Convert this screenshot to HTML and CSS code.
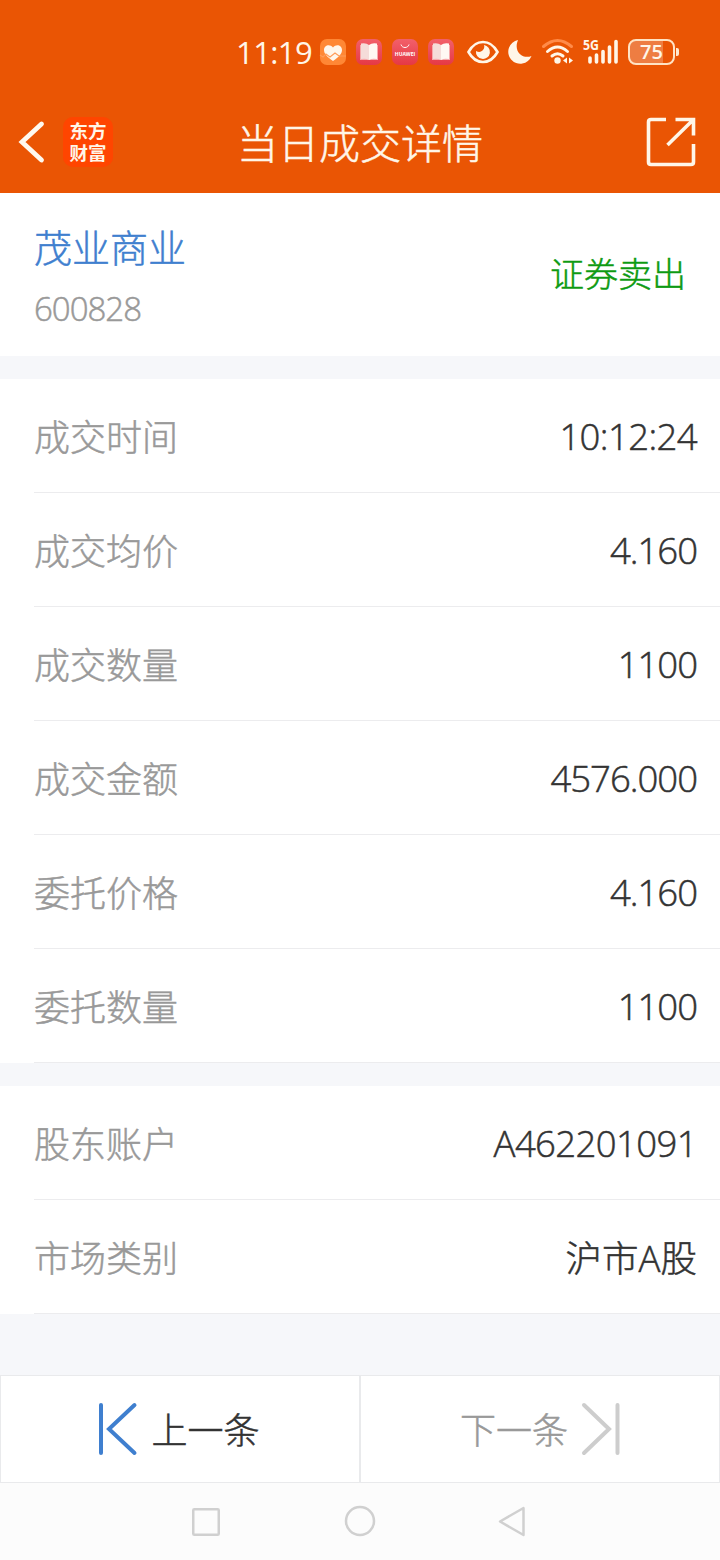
FILE: index.html
```
<!DOCTYPE html>
<html lang="zh-CN">
<head>
    <meta charset="UTF-8">
    <meta name="viewport" content="width=device-width, initial-scale=1.0">
    <title>当日成交详情</title>
    <link rel="stylesheet" href="styles.css">
</head>
<body>
    <header class="top">
        <div class="status">
            <span class="clock">11:19</span>
            <svg class="apps" width="134" height="26" viewBox="0 0 134 26">
                <defs>
                    <linearGradient id="pink" x1="0" y1="0" x2="0" y2="1">
                        <stop offset="0" stop-color="#f2606a"/>
                        <stop offset="1" stop-color="#e53945"/>
                    </linearGradient>
                    <g id="book">
                        <rect width="26" height="26" rx="7" fill="url(#pink)"/>
                        <path d="M4 6h18v15H4z" fill="#f7a9ac"/>
                        <path d="M5 4.500q5-1 8 1.500v15q-3-2-8-1z" fill="#f5dcd9"/>
                        <path d="M21 4.500q-5-1-8 1.500v15q3-2 8-1z" fill="#fff8f3"/>
                    </g>
                </defs>
                <rect width="26" height="26" rx="7" fill="#ff8735"/>
                <path d="M13 22C7 18 4 14.500 4 11c0-5 6-6.500 9-2.500 3-4 9-2.500 9 2.500 0 3.500-3 7-9 11z" fill="#fff6ec"/>
                <path d="M0 16l3 2 3-3 4 3 5-4 4 3h7" fill="none" stroke="#ff9b58" stroke-width="1.200"/>
                <use href="#book" x="36"/>
                <rect x="72" width="26" height="26" rx="7" fill="url(#pink)"/>
                <path d="M81 5.500c1 4 7 4 8 0" fill="none" stroke="#fff" stroke-width="1"/>
                <text x="85" y="17" class="huawei" text-anchor="middle">HUAWEI</text>
                <use href="#book" x="108"/>
            </svg>
            <svg class="eye" width="32" height="24" viewBox="0 0 32 24">
                <path d="M1.500 12Q7 2 16 2t14.500 10Q25 22 16 22T1.500 12z" fill="none" stroke="#fff6e8" stroke-width="2.600"/>
                <path d="M17 5a7 7 0 1 1-8 6q4 2 6.500-.5T17 5z" fill="#fff6e8"/>
            </svg>
            <svg class="moon" width="24" height="24" viewBox="0 0 24 24">
                <path d="M10 0a12 12 0 1 0 13.500 16C15 19.500 5 12 10 0z" fill="#fff6e8"/>
            </svg>
            <svg class="wifi" width="32" height="26" viewBox="0 0 32 26" fill="none" stroke="#fff6e8" stroke-width="3" stroke-linecap="round">
                <path d="M1.500 7.500q14-12 28 0" stroke="#ff8b49"/>
                <path d="M5.500 12.500q10-9 20 0M10 17q5.500-4.500 11 0"/>
                <circle cx="15.500" cy="21.500" r="3.200" fill="#fff6e8" stroke="none"/>
                <path d="M25 18.500v6l-4-3zM27 18.500v6l4-3z" fill="#fff6e8" stroke="none"/>
            </svg>
            <svg class="signal" width="37" height="34" viewBox="0 -4 37 34">
                <text x="0" y="11" class="net" textLength="16" lengthAdjust="spacingAndGlyphs">5G</text>
                <path d="M7 19v4M13.500 16v7M20 12.500v10.500M26.500 8v15M33 2.500v20.500" stroke="#fff6e8" stroke-width="3.600" stroke-linecap="round"/>
            </svg>
            <span class="battery">75</span>
        </div>
        <nav class="bar">
            <svg width="26" height="42" viewBox="0 0 26 42">
                <path d="M22.500 3L3 21l19.500 18" fill="none" stroke="#fff9ef" stroke-width="4.800" stroke-linecap="round"/>
            </svg>
            <div class="logo">东方<br>财富</div>
            <h1>当日成交详情</h1>
            <svg width="50" height="50" viewBox="0 0 50 50" fill="none" stroke="#fff6e8" stroke-width="3.600">
                <path d="M20 2.500H5Q2.500 2.500 2.500 5v40q0 2.500 2.500 2.500h40q2.500 0 2.500-2.500V27M29.500 2.500h18v16M47 3L21.500 28"/>
            </svg>
        </nav>
    </header>

    <section class="stock">
        <div>
            <h2>茂业商业</h2>
            <p>600828</p>
        </div>
        <span class="sell">证券卖出</span>
    </section>

    <dl class="list">
        <div class="row"><dt>成交时间</dt><dd class="time">10:12:24</dd></div>
        <div class="row"><dt>成交均价</dt><dd>4.160</dd></div>
        <div class="row"><dt>成交数量</dt><dd>1100</dd></div>
        <div class="row"><dt>成交金额</dt><dd>4576.000</dd></div>
        <div class="row"><dt>委托价格</dt><dd>4.160</dd></div>
        <div class="row"><dt>委托数量</dt><dd>1100</dd></div>
    </dl>
    <dl class="list">
        <div class="row"><dt>股东账户</dt><dd class="account">A462201091</dd></div>
        <div class="row"><dt>市场类别</dt><dd class="market">沪市A股</dd></div>
    </dl>

    <div class="pager">
        <button class="prev">
            <svg width="38" height="54" viewBox="0 0 38 54" fill="none" stroke="#3f7fcf" stroke-width="4" stroke-linecap="round">
                <path d="M2 3v48M35.500 3L10 27l25.500 24"/>
            </svg>
            上一条
        </button>
        <button class="next">
            下一条
            <svg width="38" height="54" viewBox="0 0 38 54" fill="none" stroke="#cdcdcd" stroke-width="4" stroke-linecap="round">
                <path d="M35.500 3v48M2 3l25 24L2 51"/>
            </svg>
        </button>
    </div>

    <footer class="keys">
        <svg width="28" height="32" viewBox="0 0 28 32"><rect x="1.250" y="3.250" width="25.500" height="25.500" rx="1"/></svg>
        <svg width="32" height="32" viewBox="0 0 32 32"><circle cx="16" cy="15" r="14"/></svg>
        <svg width="28" height="32" viewBox="0 0 28 32"><path d="M23.500 2v27L0 15.500z"/></svg>
    </footer>
</body>
</html>
```
FILE: styles.css
```
* {
    box-sizing: border-box;
}
body {
    margin: 0;
    height: 1560px;
    display: flex;
    flex-direction: column;
    background: #f6f7fa;
    color: #333;
    font-family: "Open Sans", "Noto Sans CJK SC", sans-serif;
    font-weight: 300;
    -webkit-text-stroke: 0.5px;
    overflow: hidden;
}
h1, h2, p, dl, dd {
    margin: 0;
    font-weight: 300;
}
svg {
    display: block;
    flex: none;
    overflow: visible;
}
.top {
    height: 193px;
    background: #ea5504;
    color: #fff6e8;
}
.status {
    display: flex;
    align-items: center;
    height: 104px;
    padding-left: 236px;
}
.clock {
    width: 84px;
    font-size: 31px;
    font-weight: 400;
    line-height: 36px;
    letter-spacing: -0.6px;
    -webkit-text-stroke: 0;
}
.apps {
    margin-right: 13px;
}
.huawei {
    font: 700 5px "Open Sans", sans-serif;
    fill: #fff;
    -webkit-text-stroke: 0;
}
.eye {
    margin-right: 9px;
}
.moon {
    margin-right: 10px;
}
.wifi {
    margin-right: 9px;
}
.signal {
    margin-right: 8px;
}
.net {
    font: 700 15px "Open Sans", sans-serif;
    fill: #fff6e8;
    -webkit-text-stroke: 0;
}
.battery {
    position: relative;
    width: 47px;
    height: 26px;
    border: 2px solid #ffe3c4;
    border-radius: 8px;
    background: linear-gradient(90deg, #ee7d42 76%, #ea5504 76%);
    font-size: 20px;
    font-weight: 600;
    line-height: 22px;
    text-align: center;
    -webkit-text-stroke: 0;
}
.battery::after {
    content: "";
    position: absolute;
    top: 7px;
    right: -6px;
    width: 3px;
    height: 8px;
    border-radius: 0 2px 2px 0;
    background: #ffe9d0;
}
.bar {
    display: flex;
    align-items: center;
    height: 76px;
    padding: 0 24px 0 19px;
}
.logo {
    width: 50px;
    height: 50px;
    margin-left: 18px;
    padding-top: 3px;
    border-radius: 10px;
    background: #ff4500;
    font-family: "Noto Sans CJK SC", sans-serif;
    font-size: 18.5px;
    font-weight: 700;
    line-height: 21.5px;
    text-align: center;
    -webkit-text-stroke: 0;
}
.bar h1 {
    flex: 1;
    padding: 1px 39px 0 0;
    font-size: 41px;
    line-height: 60px;
    text-align: center;
}
.stock {
    display: flex;
    justify-content: space-between;
    height: 163px;
    padding: 24px 34px 0;
    background: #fff;
}
.stock h2 {
    color: #3f7fcf;
    font-size: 38px;
    line-height: 60px;
}
.stock p {
    color: #999;
    font-size: 33px;
    line-height: 64px;
    letter-spacing: -1px;
}
.sell {
    color: #0e9a12;
    font-size: 34px;
    line-height: 114px;
}
.list {
    margin-top: 23px;
    background: #fff;
}
.row {
    display: flex;
    justify-content: space-between;
    align-items: center;
    height: 114px;
    padding: 0 23px 0 34px;
    background: linear-gradient(#ececee, #ececee) 34px 100% / 100% 1px no-repeat;
}
.row dt {
    padding-bottom: 1px;
    color: #999;
    font-size: 36px;
}
.row dd {
    font-size: 36.5px;
    letter-spacing: -1px;
}
.row .time {
    letter-spacing: -0.6px;
}
.row .account {
    letter-spacing: -0.6px;
}
.row .market {
    padding-bottom: 1px;
    font-size: 36.5px;
    letter-spacing: 0;
}
.pager {
    display: flex;
    height: 108px;
    margin-top: auto;
}
.pager button {
    display: flex;
    width: 50%;
    justify-content: center;
    align-items: center;
    gap: 14px;
    padding: 0 1px 1px 0;
    border: 1px solid #e9eaec;
    background: #fff;
    color: #333;
    font: inherit;
    font-size: 36px;
}
.pager .next {
    padding-right: 0;
    color: #999;
}
.keys {
    display: flex;
    justify-content: center;
    height: 77px;
    padding-top: 23px;
    gap: 124px;
    background: #fcfcfc;
}
.keys svg {
    fill: none;
    stroke: #d0d0d0;
    stroke-width: 2.500;
    stroke-linejoin: round;
}
```
